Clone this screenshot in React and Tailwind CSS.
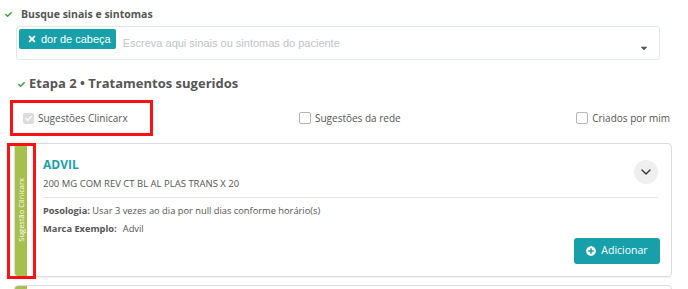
import React from 'react';
import { FaCheck, FaTimes, FaCaretDown, FaPlusCircle } from 'react-icons/fa';
import { ChevronDown } from 'lucide-react';

const Checkbox = ({ checked = false, label }) => (
  <label className="flex items-center gap-[4px] text-[10px] leading-[14px] text-[#555]">
    {checked ? (
      <span className="w-[11px] h-[11px] rounded-[2px] bg-[#dcdcdc] flex items-center justify-center">
        <FaCheck size={7} className="text-white" />
      </span>
    ) : (
      <span className="w-[12px] h-[12px] rounded-[2px] border border-[#b5b5b5] bg-white" />
    )}
    <span>{label}</span>
  </label>
);

const TreatmentCard = ({ name, detail, posologia, marca, highlight = false }) => (
  <div className="relative ml-[14px] w-[658px] border border-[#dcdcdc] rounded-[4px] flex shadow-[0_1px_1px_rgba(0,0,0,0.05)]">
    <div className="w-[12px] bg-[#a5c04d] rounded-l-[3px] flex items-center justify-center">
      <span className="[writing-mode:vertical-rl] rotate-180 text-white text-[7.5px] leading-[12px] whitespace-nowrap">
        Sugestão Clinicarx
      </span>
    </div>
    <div className="flex-1 pl-[16px] pr-[11px] pt-[13px] pb-[12px] flex flex-col">
      <div className="flex justify-between">
        <div>
          <h3 className="text-[12px] leading-[16px] font-bold text-[#18a2ac]">{name}</h3>
          <p className="mt-[4px] text-[9.5px] leading-[14px] text-[#555]">{detail}</p>
        </div>
        <button className="mt-[3px] mr-[2px] w-[24px] h-[24px] rounded-full bg-[#efefef] flex items-center justify-center text-[#333]">
          <ChevronDown size={16} strokeWidth={2} />
        </button>
      </div>
      <div className="mt-[6px] mr-[2px] h-px bg-[#e6e6e6]" />
      <p className="mt-[6px] text-[9.3px] leading-[14px] text-[#555]">
        <span className="font-bold">Posologia:</span> {posologia}
      </p>
      <p className="mt-[4px] text-[9.3px] leading-[14px] text-[#555]">
        <span className="font-bold">Marca Exemplo:</span>
        <span className="ml-[6px]">{marca}</span>
      </p>
      <button className="self-end mt-[2px] w-[86px] h-[26px] rounded-[3px] bg-[#17a0aa] text-white text-[10.5px] flex items-center justify-center gap-[5px]">
        <FaPlusCircle size={10} />
        <span>Adicionar</span>
      </button>
    </div>
    {highlight && (
      <div className="absolute left-[-8px] top-[-1px] w-[29px] h-[136px] border-[3px] border-[#ff1111] pointer-events-none" />
    )}
  </div>
);

// next card in the list, only its top edge is in view
const CardStub = () => (
  <div className="ml-[14px] w-[658px] h-[40px] border border-[#dcdcdc] rounded-[4px] flex">
    <div className="w-[12px] bg-[#a5c04d] rounded-l-[3px]" />
  </div>
);

export default function App() {
  return (
    <div className="w-[688px] h-[289px] overflow-hidden bg-white font-['Open_Sans',sans-serif] text-[#555]">
      <div className="pt-[7px] pl-[5px] flex items-center gap-[9px] h-[21px]">
        <FaCheck size={7} className="text-[#3f9b3c]" />
        <span className="text-[10.5px] leading-[14px] font-bold text-[#555]">Busque sinais e sintomas</span>
      </div>

      <div className="mt-[5px] ml-[16px] w-[644px] h-[34px] border border-[#e2e8ea] rounded-[3px] flex items-start pl-[2px] pt-[2px] pr-[10px]">
        <span className="h-[20px] pl-[8px] pr-[5px] rounded-[2px] bg-[#17a0aa] text-white flex items-center gap-[4px] font-['Liberation_Sans',Arial,sans-serif] text-[11px] leading-[14px]">
          <FaTimes size={10} />
          dor de cabeça
        </span>
        <span className="ml-[7px] mt-[7px] font-['Liberation_Sans',Arial,sans-serif] text-[11px] leading-[14px] text-[#c0c4c8]">
          Escreva aqui sinais ou sintomas do paciente
        </span>
        <FaCaretDown size={10} className="ml-auto mt-[14px] text-[#555]" />
      </div>

      <div className="mt-[14px] pl-[18px] flex items-center gap-[4px] h-[18px]">
        <FaCheck size={7} className="text-[#3f9b3c] mt-[3px]" />
        <h2 className="text-[13px] leading-[18px] font-bold text-[#555]">Etapa 2 • Tratamentos sugeridos</h2>
      </div>

      <div className="mt-[8px] ml-[10px] w-[662px] flex items-center pr-[2px]">
        <div className="w-[143px] h-[36px] border-[3px] border-[#ff1111] flex items-center pl-[10px]">
          <Checkbox checked label="Sugestões Clinicarx" />
        </div>
        <div className="ml-[146px]">
          <Checkbox label="Sugestões da rede" />
        </div>
        <div className="ml-auto">
          <Checkbox label="Criados por mim" />
        </div>
      </div>

      <div className="mt-[7px] flex flex-col gap-[8px]">
        <TreatmentCard
          highlight
          name="ADVIL"
          detail="200 MG COM REV CT BL AL PLAS TRANS X 20"
          posologia="Usar 3 vezes ao dia por null dias conforme horário(s)"
          marca="Advil"
        />
        <CardStub />
      </div>
    </div>
  );
}
